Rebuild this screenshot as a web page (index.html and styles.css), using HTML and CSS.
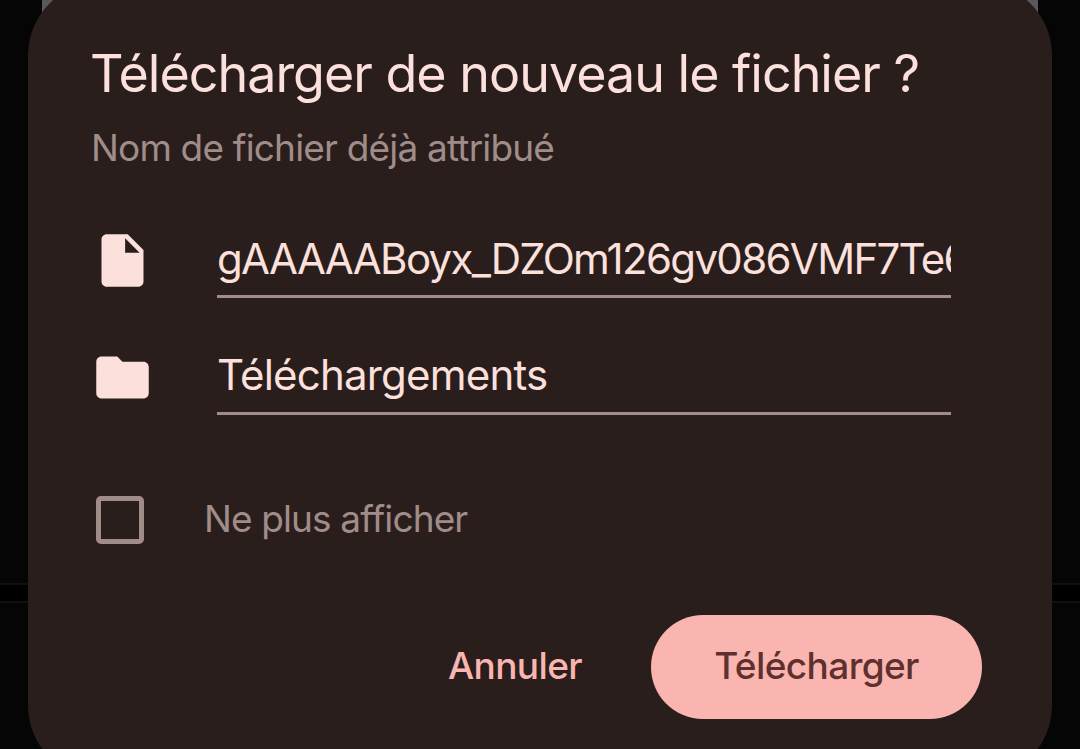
FILE: index.html
```html
<!DOCTYPE html>
<html lang="fr">
<head>
    <meta charset="UTF-8">
    <meta name="viewport" content="width=device-width, initial-scale=1.0">
    <title>Télécharger de nouveau le fichier ?</title>
    <link rel="stylesheet" href="styles.css">
</head>
<body>
    <div class="page-card"></div>
    <div class="page-gap"></div>

    <div class="dialog">
        <h1 class="title">Télécharger de nouveau le fichier ?</h1>
        <p class="subtitle">Nom de fichier déjà attribué</p>

        <div class="row">
            <svg class="icon" viewBox="0 0 24 24">
                <path fill-rule="evenodd" d="M6 2h8l6 6v12c0 1.1-.9 2-2 2H6c-1.1 0-2-.9-2-2V4c0-1.1.9-2 2-2zm7 1.5V9h5.5z"/>
            </svg>
            <div class="field file-name">gAAAAABoyx_DZOm126gv086VMF7Te6</div>
        </div>

        <div class="row">
            <svg class="icon" viewBox="0 0 24 24">
                <path d="M10 4H4c-1.1 0-1.99.9-1.99 2L2 18c0 1.1.9 2 2 2h16c1.1 0 2-.9 2-2V8c0-1.1-.9-2-2-2h-8z"/>
            </svg>
            <div class="field folder-name">Téléchargements</div>
        </div>

        <label class="check-row">
            <span class="checkbox"></span>
            <span class="check-label">Ne plus afficher</span>
        </label>

        <div class="actions">
            <button class="btn btn-text">Annuler</button>
            <button class="btn btn-filled">Télécharger</button>
        </div>
    </div>
</body>
</html>
```
FILE: styles.css
```css
* {
    box-sizing: border-box;
}

body {
    margin: 0;
    height: 749px;
    overflow: hidden;
    position: relative;
    background: #050505;
    font-family: Inter, Roboto, "Liberation Sans", sans-serif;
    color: #fbe0dc;
}

/* dimmed page behind the dialog */
.page-card {
    position: absolute;
    top: 0;
    left: 42px;
    width: 996px;
    height: 40px;
    background: #595959;
}

.page-gap {
    position: absolute;
    top: 583px;
    left: 0;
    width: 100%;
    height: 20px;
    background: #000;
    border-top: 2px solid #101010;
    border-bottom: 2px solid #101010;
}

.dialog {
    position: relative;
    width: 1024px;
    height: 797px;
    margin: -18px auto 0;
    padding: 58px 70px 0 64px;
    border-radius: 73.5px;
    background: #291e1c;
    white-space: nowrap;
}

.title {
    margin: 0 0 0 -2px;
    height: 68px;
    line-height: 68px;
    font-size: 52px;
    font-weight: 400;
    letter-spacing: -1px;
}

.subtitle {
    margin: 16px 0 55px -1px;
    height: 48px;
    line-height: 48px;
    font-size: 37px;
    letter-spacing: -0.82px;
    color: #a08c89;
}

.row {
    display: flex;
    align-items: flex-start;
    height: 117px;
    margin-left: -1px;
}

.icon {
    width: 63px;
    height: 63px;
    margin-top: 2px;
    fill: #fbe0dc;
}

.field {
    width: 734px;
    height: 71px;
    margin-left: 63px;
    line-height: 64px;
    font-size: 42px;
    letter-spacing: -0.8px;
    overflow: hidden;
    border-bottom: 3px solid #a08c89;
}

.file-name {
    letter-spacing: -1.67px;
}

.folder-name {
    line-height: 62px;
}

.check-row {
    display: flex;
    align-items: center;
    height: 63px;
    margin: 27px 0 0 4px;
}

.checkbox {
    width: 48px;
    height: 48px;
    border: 5px solid #a08c89;
    border-radius: 5px;
}

.check-label {
    margin-left: 60px;
    padding-bottom: 2px;
    font-size: 37px;
    letter-spacing: -0.88px;
    color: #a08c89;
}

.actions {
    display: flex;
    justify-content: flex-end;
    margin-top: 64px;
}

.btn {
    height: 104px;
    padding: 0 0 3px;
    border: none;
    border-radius: 52px;
    background: none;
    font-family: inherit;
    font-size: 37px;
    font-weight: 500;
    letter-spacing: -0.6px;
}

.btn-text {
    width: 200px;
    margin-right: 36px;
    color: #fab5b0;
}

.btn-filled {
    width: 331px;
    background: #fab5b0;
    color: #5f312e;
}
```
